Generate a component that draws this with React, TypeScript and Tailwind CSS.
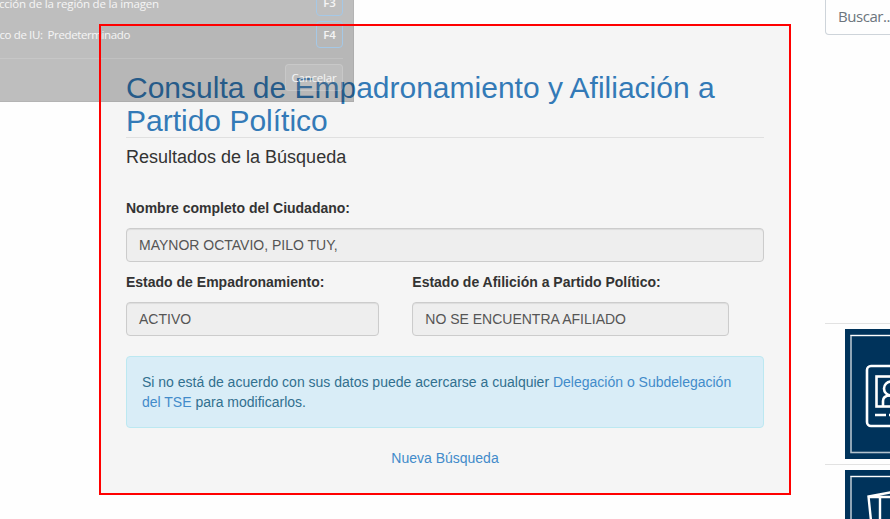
import React from "react";

const arial = "font-['Liberation_Sans',Arial,sans-serif]";
const segoe = "font-['Open_Sans','Noto_Sans',sans-serif]";

function Field({ label, value, className = "" }: { label: string; value: string; className?: string }) {
  return (
    <div className={className}>
      <label className="mb-[10px] block whitespace-nowrap font-bold">{label}</label>
      <div className="flex h-[34px] items-center rounded-[4px] border border-[#ccc] bg-[#eee] px-3 text-[#555] shadow-[inset_0_1px_1px_rgba(0,0,0,0.075)]">
        {value}
      </div>
    </div>
  );
}

function CaptureOverlay() {
  return (
    <div className={`${segoe} absolute left-0 top-0 h-[102px] w-[354px] overflow-hidden border-b border-r border-black/5 bg-black/25 font-medium leading-[16px] text-white/85`}>
      <div className="flex h-[18px] items-end justify-between pr-[10px]">
        <span className="mb-[6px] flex h-[16px] w-[159px] justify-end whitespace-nowrap text-[11.5px] tracking-[-0.17px]">
          cción de la región de la imagen
        </span>
        <kbd className="mb-[2px] flex h-[27px] w-[27px] shrink-0 items-center justify-center rounded-[4px] border border-[#a5c8e6] font-[inherit] text-[11.5px] font-semibold">F3</kbd>
      </div>
      <div className="mt-[3px] flex h-[27px] items-center justify-between pr-[10px]">
        <span className="flex w-[130px] justify-end gap-[5px] whitespace-nowrap text-[11.5px] tracking-[-0.38px]">
          <span>co de IU:</span>
          <span>Predeterminado</span>
        </span>
        <kbd className="flex h-[27px] w-[27px] shrink-0 items-center justify-center rounded-[4px] border border-[#a5c8e6] font-[inherit] text-[11.5px] font-semibold">F4</kbd>
      </div>
      <div className="mr-[10px] mt-[10px] flex justify-end border-t border-white/15 pt-[5px]">
        <span className="flex h-[27px] w-[58px] items-center justify-center rounded-[4px] border border-white/15 bg-white/10 text-[11.5px] tracking-[-0.2px]">
          Cancelar
        </span>
      </div>
    </div>
  );
}

function Tile({ children }: { children: React.ReactNode }) {
  return (
    <div className="h-[141px] border-t border-[#e2e2e2] pl-5 pt-[5px]">
      <svg width="130" height="130" viewBox="0 0 130 130" fill="none">
        <rect width="130" height="130" fill="#00335b" />
        <rect x="6" y="6.5" width="118" height="117" stroke="#b3c2ce" strokeWidth="1.6" />
        <path d="M5.5 6.5H124" stroke="#fff" strokeWidth="1.2" />
        {children}
      </svg>
    </div>
  );
}

export default function App() {
  return (
    <div className="relative flex h-[519px] w-[890px] overflow-hidden bg-[#fefefe]">
      <main className={`${arial} w-[825px] shrink-0 pl-[99px] pt-[24px] text-[14px] leading-[20px] text-[#333]`}>
        <section className="h-[471px] w-[692px] bg-[#f5f5f5] px-[27px] pt-[47px]">
          <h1 className="h-[67px] border-b border-[#e0e0e0] text-[30px] leading-[33px] text-[#337ab7]">
            Consulta de Empadronamiento y Afiliación a Partido Político
          </h1>
          <h4 className="mt-[9px] text-[18px] leading-[20px]">Resultados de la Búsqueda</h4>
          <Field className="mt-[31px]" label="Nombre completo del Ciudadano:" value="MAYNOR OCTAVIO, PILO TUY," />
          <div className="mt-[10px] flex gap-[33.3px]">
            <Field className="w-[253px]" label="Estado de Empadronamiento:" value="ACTIVO" />
            <Field className="w-[317px]" label="Estado de Afilición a Partido Político:" value="NO SE ENCUENTRA AFILIADO" />
          </div>
          <p className="mt-5 h-[72px] rounded-[4px] border border-[#bce8f1] bg-[#d9edf7] p-[15px] text-[#31708f]">
            Si no está de acuerdo con sus datos puede acercarse a cualquier{" "}
            <a className="text-[#428bca]">Delegación o Subdelegación del TSE</a> para modificarlos.
          </p>
          <p className="mt-5 text-center text-[#428bca]">Nueva Búsqueda</p>
        </section>
      </main>
      <aside className="w-[65px] shrink-0 overflow-hidden">
        <div className="w-[220px]">
          <div className={`${segoe} h-[35px] rounded-b-[4px] border border-t-0 border-[#ced4da] pl-[12px] pt-[4px] text-[15px] leading-[24px] tracking-[-0.45px] text-[#6c757d]`}>
            Buscar...
          </div>
          <div className="mt-[288px]">
            <Tile>
              <rect x="22" y="37" width="86" height="60" rx="4" stroke="#fff" strokeWidth="2.6" />
              <rect x="31.5" y="47.5" width="27" height="30" stroke="#fff" strokeWidth="2.6" />
              <circle cx="46" cy="59.5" r="7" stroke="#fff" strokeWidth="2.6" />
              <path d="M38 77v-5c0-4 3-5.5 8-5.5s8 1.5 8 5.5v5M30 86h11M44 86h11" stroke="#fff" strokeWidth="2.6" />
            </Tile>
            <Tile>
              <path d="M29 80 23.5 26.5 59 20M35 80V27h44v53M24 27h11" stroke="#fff" strokeWidth="2.4" />
            </Tile>
          </div>
        </div>
      </aside>
      <CaptureOverlay />
      <div className="pointer-events-none absolute left-[99px] top-[24px] h-[471px] w-[692px] border-2 border-[#f00]" />
    </div>
  );
}
